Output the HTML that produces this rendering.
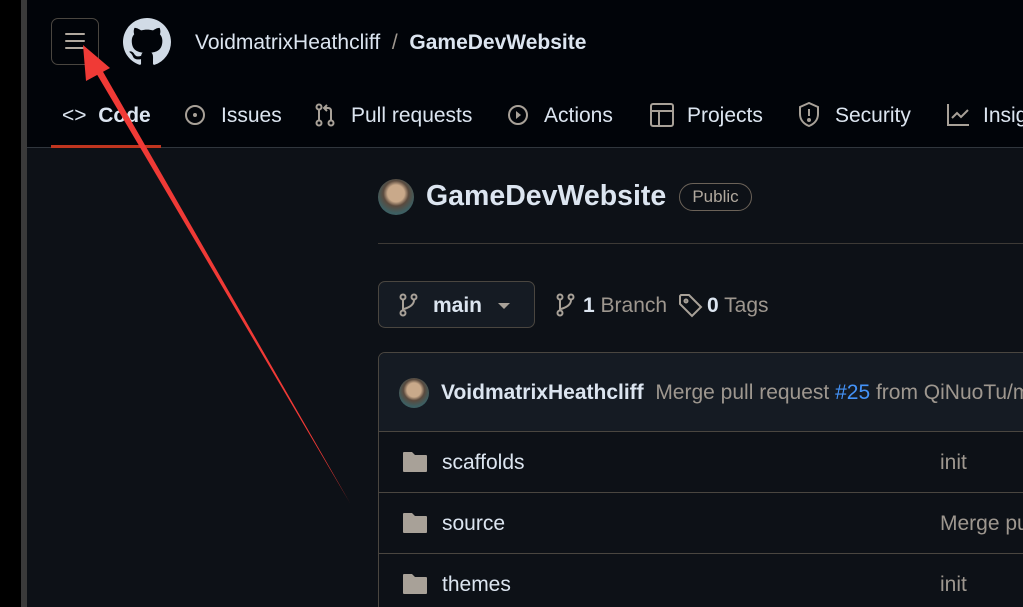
<!DOCTYPE html>
<html style="width:1023px;height:607px;overflow:hidden"><head><meta charset="utf-8"><style>
*{margin:0;padding:0;box-sizing:border-box}
body{width:1023px;height:607px;overflow:hidden;background:#000;font-family:"Liberation Sans","DejaVu Sans",sans-serif;position:relative}
.strip{position:absolute;left:21px;top:0;width:6px;height:607px;background:#3a3a3a}
.page{position:absolute;left:27px;top:0;right:0;bottom:0;background:#0d1117}
.hdr{position:absolute;left:27px;top:0;right:0;height:148px;background:#010409;border-bottom:1px solid #30363d}
.t{position:absolute;white-space:nowrap;color:#dce5f0;font-size:21px}
.g{color:#9e978f}
svg.i{position:absolute}
</style></head><body>
<div class="strip"></div>
<div class="page"></div>
<div class="hdr"></div>
<div style="position:absolute;left:51px;top:18px;width:48px;height:47px;border:1px solid #4a4640;border-radius:7px"></div>
<svg class="i" style="left:64px;top:31px" width="22" height="20"><g stroke="#b0a89e" stroke-width="2" stroke-linecap="round"><line x1="2" y1="3" x2="20" y2="3"/><line x1="2" y1="10" x2="20" y2="10"/><line x1="2" y1="17" x2="20" y2="17"/></g></svg>
<svg class="i" style="left:123px;top:18px" width="48" height="48" viewBox="0 0 16 16"><path fill="#d1dbe6" d="M8 0C3.58 0 0 3.58 0 8c0 3.540 2.29 6.53 5.47 7.59.4.07.55-.17.55-.38 0-.19-.01-.82-.01-1.49-2.01.37-2.53-.49-2.690-.94-.09-.23-.48-.94-.82-1.13-.28-.15-.68-.52-.01-.53.63-.01 1.08.58 1.23.82.72 1.21 1.87.87 2.33.66.07-.52.28-.87.51-1.07-1.78-.2-3.64-.89-3.64-3.950 0-.87.31-1.59.82-2.15-.08-.2-.36-1.02.08-2.12 0 0 .67-.21 2.2.82.64-.18 1.32-.27 2-.27.68 0 1.36.09 2 .27 1.53-1.04 2.2-.82 2.2-.82.44 1.1.16 1.92.08 2.12.51.56.82 1.27.82 2.15 0 3.07-1.87 3.75-3.65 3.95.29.25.54.73.54 1.48 0 1.07-.01 1.93-.01 2.2 0 .21.15.46.55.38A8.013 8.013 0 0016 8c0-4.42-3.58-8-8-8z"/></svg>
<div class="t" style="left:195px;top:31px">VoidmatrixHeathcliff <span class="g">&nbsp;/&nbsp;</span> <b>GameDevWebsite</b></div>
<div class="t" style="left:62px;top:104px;font-weight:bold"><span style="font-weight:normal">&lt;&gt;</span>&nbsp; Code</div>
<div style="position:absolute;left:51px;top:145px;width:110px;height:3px;background:#c0351f"></div>
<svg class="i" style="left:184px;top:104px" width="22" height="22"><circle cx="11" cy="11" r="9" fill="none" stroke="#a8a198" stroke-width="2"/><circle cx="11" cy="11" r="2" fill="#a8a198"/></svg>
<div class="t" style="left:221px;top:104px">Issues</div>
<svg class="i" style="left:314px;top:103px" width="22" height="24" fill="none" stroke="#a8a198" stroke-width="2"><circle cx="5" cy="4" r="2.5"/><circle cx="5" cy="20" r="2.5"/><circle cx="17" cy="20" r="2.5"/><line x1="5" y1="7" x2="5" y2="17"/><path d="M17 17V8q0-3-3-3h-3M13 2l-3 3 3 3"/></svg>
<div class="t" style="left:351px;top:104px">Pull requests</div>
<svg class="i" style="left:507px;top:104px" width="22" height="22"><circle cx="11" cy="11" r="9" fill="none" stroke="#a8a198" stroke-width="2"/><path d="M9 7l5 4-5 4z" fill="#a8a198"/></svg>
<div class="t" style="left:544px;top:104px">Actions</div>
<svg class="i" style="left:650px;top:103px" width="24" height="24" fill="none" stroke="#a8a198" stroke-width="2"><rect x="1" y="1" width="22" height="22" rx="2"/><line x1="1" y1="8" x2="23" y2="8"/><line x1="9" y1="8" x2="9" y2="23"/></svg>
<div class="t" style="left:687px;top:104px">Projects</div>
<svg class="i" style="left:797px;top:102px" width="24" height="26" fill="none" stroke="#a8a198" stroke-width="2"><path d="M12 1L3 5v7c0 6 4 10 9 12 5-2 9-6 9-12V5z"/><line x1="12" y1="7" x2="12" y2="14"/><circle cx="12" cy="18" r="1" fill="#a8a198"/></svg>
<div class="t" style="left:835px;top:104px">Security</div>
<svg class="i" style="left:946px;top:103px" width="24" height="24" fill="none" stroke="#a8a198" stroke-width="2"><path d="M2 1v21h21M6 15l5-5 4 4 7-7"/></svg>
<div class="t" style="left:983px;top:104px">Insights</div>
<div style="position:absolute;left:378px;top:179px;width:36px;height:36px;border-radius:50%;background:radial-gradient(circle at 50% 40%,#c9a98a 0 30%,#5a4a3e 45%,#3d5f62 70%)"></div>
<div class="t" style="left:426px;top:180px;font-size:28.5px;font-weight:bold">GameDevWebsite</div>
<div class="t g" style="left:679px;top:183px;width:73px;height:28px;border:1px solid #6b6258;border-radius:14px;font-size:17px;text-align:center;line-height:26px;color:#b0a89e">Public</div>
<div style="position:absolute;left:378px;top:243px;right:0;height:1px;background:#3d3a36"></div>
<div style="position:absolute;left:378px;top:281px;width:157px;height:47px;border:1px solid #4a4640;border-radius:7px;background:#151b23"></div>
<svg class="i" style="left:398px;top:293px" width="22" height="24" fill="none" stroke="#a8a198" stroke-width="2"><circle cx="5" cy="4" r="2.5"/><circle cx="5" cy="20" r="2.5"/><circle cx="16" cy="4" r="2.5"/><path d="M5 7v10M16 7q0 6-10 9"/></svg>
<div class="t" style="left:433px;top:294px;font-weight:bold">main</div>
<svg class="i" style="left:497px;top:302px" width="14" height="8"><path d="M1 1h12L7 7z" fill="#a8a198"/></svg>
<svg class="i" style="left:555px;top:293px" width="22" height="24" fill="none" stroke="#a8a198" stroke-width="2"><circle cx="5" cy="4" r="2.5"/><circle cx="5" cy="20" r="2.5"/><circle cx="16" cy="4" r="2.5"/><path d="M5 7v10M16 7q0 6-10 9"/></svg>
<div class="t g" style="left:583px;top:294px"><b style="color:#dce5f0">1</b> Branch</div>
<svg class="i" style="left:678px;top:293px" width="26" height="26" fill="none" stroke="#a8a198" stroke-width="2"><path d="M2 3v8l12 12 9-9L11 2H3z"/><circle cx="8" cy="8" r="1.5"/></svg>
<div class="t g" style="left:707px;top:294px"><b style="color:#dce5f0">0</b> Tags</div>
<div style="position:absolute;left:378px;top:352px;width:660px;height:255px;border:1px solid #4a4640;border-bottom:none;border-radius:7px 7px 0 0;overflow:hidden">
<div style="height:79px;background:#151b23;border-bottom:1px solid #4a4640"></div>
<div style="height:61px;border-bottom:1px solid #4a4640"></div>
<div style="height:61px;border-bottom:1px solid #4a4640"></div>
</div>
<div style="position:absolute;left:399px;top:378px;width:30px;height:30px;border-radius:50%;background:radial-gradient(circle at 50% 40%,#c9a98a 0 30%,#5a4a3e 45%,#3d5f62 70%)"></div>
<div class="t" style="left:441px;top:381px;font-weight:bold">VoidmatrixHeathcliff <span class="g" style="font-weight:normal">&nbsp;Merge pull request <span style="color:#4493f8">#25</span> from QiNuoTu/main</span></div>
<svg class="i" style="left:402px;top:451px" width="26" height="22"><path d="M2 1h8l3 3h11q1 0 1 1v15q0 1-1 1H2q-1 0-1-1V2q0-1 1-1z" fill="#a8a198"/></svg>
<div class="t" style="left:442px;top:451px">scaffolds</div>
<div class="t g" style="left:940px;top:451px">init</div>
<svg class="i" style="left:402px;top:512px" width="26" height="22"><path d="M2 1h8l3 3h11q1 0 1 1v15q0 1-1 1H2q-1 0-1-1V2q0-1 1-1z" fill="#a8a198"/></svg>
<div class="t" style="left:442px;top:512px">source</div>
<div class="t g" style="left:940px;top:512px">Merge pull</div>
<svg class="i" style="left:402px;top:573px" width="26" height="22"><path d="M2 1h8l3 3h11q1 0 1 1v15q0 1-1 1H2q-1 0-1-1V2q0-1 1-1z" fill="#a8a198"/></svg>
<div class="t" style="left:442px;top:573px">themes</div>
<div class="t g" style="left:940px;top:573px">init</div>
<svg class="i" style="left:0;top:0" width="1023" height="607"><path d="M350 503L92 66 98 63z" fill="#f03a36"/><path d="M83 45L110 68 86 81z" fill="#f03a36"/></svg>
</body></html>
